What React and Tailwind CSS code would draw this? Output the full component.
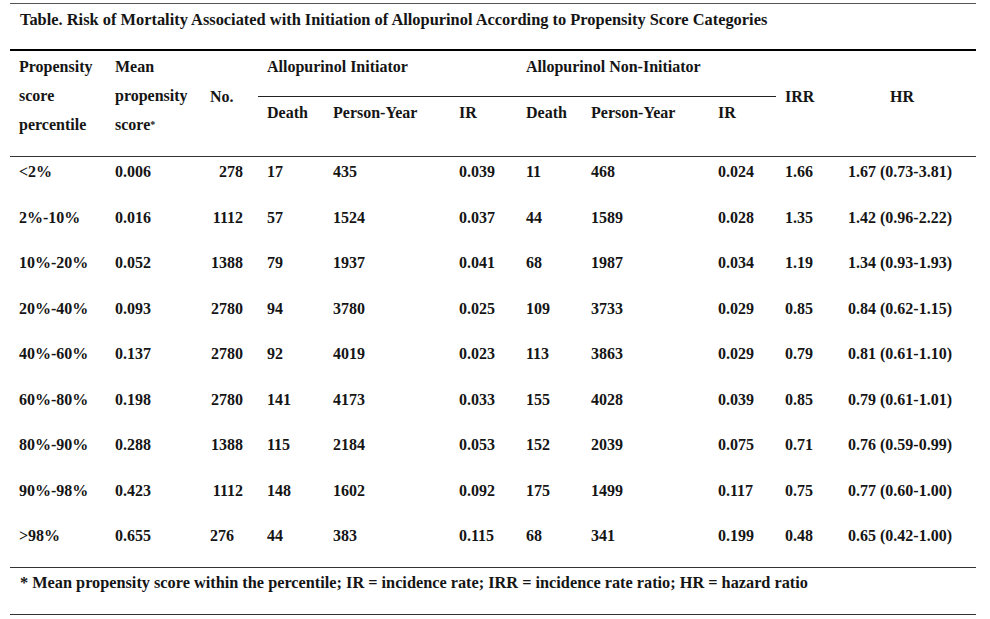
import React from 'react'

const rows = [
  ['<2%', '0.006', '278', '17', '435', '0.039', '11', '468', '0.024', '1.66', '1.67 (0.73-3.81)'],
  ['2%-10%', '0.016', '1112', '57', '1524', '0.037', '44', '1589', '0.028', '1.35', '1.42 (0.96-2.22)'],
  ['10%-20%', '0.052', '1388', '79', '1937', '0.041', '68', '1987', '0.034', '1.19', '1.34 (0.93-1.93)'],
  ['20%-40%', '0.093', '2780', '94', '3780', '0.025', '109', '3733', '0.029', '0.85', '0.84 (0.62-1.15)'],
  ['40%-60%', '0.137', '2780', '92', '4019', '0.023', '113', '3863', '0.029', '0.79', '0.81 (0.61-1.10)'],
  ['60%-80%', '0.198', '2780', '141', '4173', '0.033', '155', '4028', '0.039', '0.85', '0.79 (0.61-1.01)'],
  ['80%-90%', '0.288', '1388', '115', '2184', '0.053', '152', '2039', '0.075', '0.71', '0.76 (0.59-0.99)'],
  ['90%-98%', '0.423', '1112', '148', '1602', '0.092', '175', '1499', '0.117', '0.75', '0.77 (0.60-1.00)'],
  ['>98%', '0.655', '276', '44', '383', '0.115', '68', '341', '0.199', '0.48', '0.65 (0.42-1.00)'],
]

const cols = 'grid grid-cols-[96px_95px_57px_66px_126px_67px_65px_127px_67px_63px_137px]'

export default function App() {
  return (
    <div className="w-[990px] h-[619px] bg-white pl-[10px] pr-[14px] pt-[3px] font-['Liberation_Serif',serif] font-bold text-[16px] text-[#151515]">
      {/* Title */}
      <div className="border-t border-[#555] h-[46px] pl-[10px] pt-[6px] leading-[20px] text-[16.4px] whitespace-nowrap">
        Table. Risk of Mortality Associated with Initiation of Allopurinol According to Propensity Score Categories
      </div>

      {/* Header */}
      <div className={`${cols} grid-rows-[46px_59px] border-t-2 border-black leading-[29px]`}>
        <div className="row-span-2 pl-[9px] pt-[1px]">
          Propensity<br />score<br />percentile
        </div>
        <div className="row-span-2 pl-[9px] pt-[1px] whitespace-nowrap">
          Mean<br />propensity<br />score<sup className="text-[10px] relative -top-[2px]">*</sup>
        </div>
        <div className="row-span-2 pl-[9px] pt-[31px]">No.</div>
        <div className="col-span-3 pl-[9px] pt-[1px] border-b border-[#222]">Allopurinol Initiator</div>
        <div className="col-span-3 pl-[9px] pt-[1px] border-b border-[#222]">Allopurinol Non-Initiator</div>
        <div className="row-span-2 pl-[9px] pt-[31px]">IRR</div>
        <div className="row-span-2 pl-[51px] pt-[31px]">HR</div>
        <div className="pl-[9px] pt-[1px]">Death</div>
        <div className="pl-[9px] pt-[1px]">Person-Year</div>
        <div className="pl-[9px] pt-[1px]">IR</div>
        <div className="pl-[9px] pt-[1px]">Death</div>
        <div className="pl-[9px] pt-[1px]">Person-Year</div>
        <div className="pl-[9px] pt-[1px]">IR</div>
      </div>

      {/* Body */}
      <div className="border-t border-[#333]">
        {rows.map((r, i) => (
          <div key={i} className={`${cols} h-[45.5px] leading-[20px] pt-[5px]`}>
            {r.map((v, j) => (
              <div
                key={j}
                className={
                  j === 2 && i !== rows.length - 1
                    ? 'text-right pr-[15px] whitespace-nowrap'
                    : 'pl-[9px] whitespace-nowrap'
                }
              >
                {v}
              </div>
            ))}
          </div>
        ))}
      </div>

      {/* Footnote */}
      <div className="border-t border-b border-[#333] h-[48px] pl-[10px] pt-[5px] leading-[20px] text-[16.3px] whitespace-nowrap">
        * Mean propensity score within the percentile; IR = incidence rate; IRR = incidence rate ratio; HR = hazard ratio
      </div>
    </div>
  )
}
